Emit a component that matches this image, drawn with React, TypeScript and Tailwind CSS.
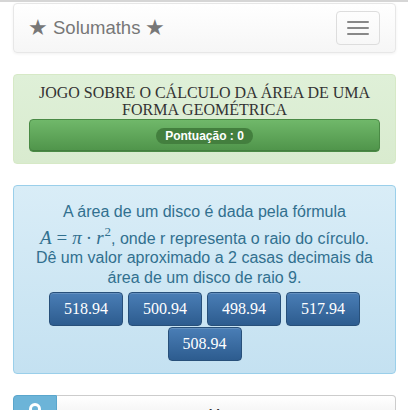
import React from "react";

const serif = { fontFamily: '"Liberation Serif", "Times New Roman", serif' };

export default function App() {
  const answers = ["518.94", "500.94", "498.94", "517.94", "508.94"];
  return (
    <div className="w-[408px] h-[410px] overflow-hidden bg-white" style={{ fontFamily: '"Liberation Sans", Arial, sans-serif' }}>
      <div className="h-[2px] bg-[#d6d6d6]" />
      {/* Navbar */}
      <div className="ml-[13px] mr-[12px] mt-[1px] h-[50px] rounded-[4px] border border-[#e7e7e7] bg-gradient-to-b from-white to-[#f6f6f6] shadow-[0_1px_3px_rgba(0,0,0,0.06)] flex items-center justify-between pl-[14px] pr-[15px]">
        <div className="text-[18.5px] text-[#777] flex items-center gap-[5px] leading-none">
          <span className="text-[22px]">★</span>
          <span>Solumaths</span>
          <span className="text-[22px]">★</span>
        </div>
        <div className="w-[44px] h-[34px] rounded-[4px] border border-[#ddd] flex flex-col items-center justify-center gap-[4px]">
          <span className="block w-[22px] h-[2px] bg-[#888] rounded-[1px]" />
          <span className="block w-[22px] h-[2px] bg-[#888] rounded-[1px]" />
          <span className="block w-[22px] h-[2px] bg-[#888] rounded-[1px]" />
        </div>
      </div>

      {/* Green panel */}
      <div className="ml-[13px] mr-[12px] mt-[21px] rounded-[4px] border border-[#d6e9c6] bg-gradient-to-b from-[#dff0d8] to-[#d9ebcf] px-[15px] pt-[9px] pb-[11px]">
        <div className="text-center text-[16px] leading-[17px] text-[#333] uppercase" style={serif}>
          Jogo sobre o cálculo da área de uma forma geométrica
        </div>
        <div className="mt-[1px] h-[33px] rounded-[4px] border border-[#4a8a45] bg-gradient-to-b from-[#70b86a] to-[#4f944a] flex items-center justify-center shadow-[inset_0_-1px_0_rgba(0,0,0,0.15)]">
          <span className="h-[16px] px-[9px] rounded-full bg-[#437f3e] text-white text-[12px] font-bold leading-[16px]">
            Pontuação : 0
          </span>
        </div>
      </div>

      {/* Blue panel */}
      <div className="ml-[13px] mr-[12px] mt-[21px] h-[189px] rounded-[4px] border border-[#9acfea] bg-gradient-to-b from-[#d9edf7] to-[#c4e1f1] pt-[16px] px-[10px]">
        <div className="text-center text-[16px] leading-[20px] text-[#31708f]">
          <div>A área de um disco é dada pela fórmula</div>
          <div className="mt-[6px] h-[20px] leading-[20px]">
            <span className="text-[19px] leading-none text-[#31708f]" style={serif}>
              <i>A</i>
              <span className="mx-[5px]">=</span>
              <i>π</i>
              <span className="mx-[4px]">·</span>
              <i>r</i>
              <span className="text-[13px] relative top-[-8px] ml-[1px]">2</span>
            </span>
            , onde r representa o raio do círculo.
          </div>
          <div>Dê um valor aproximado a 2 casas decimais da</div>
          <div>área de um disco de raio 9.</div>
        </div>
        <div className="mt-[4px] flex flex-wrap justify-center gap-x-[5px] gap-y-[1px] px-[18px]">
          {answers.map((a) => (
            <button
              key={a}
              className="h-[34px] px-[14px] rounded-[4px] border border-[#28507a] bg-gradient-to-b from-[#4a7eb6] to-[#2d5c8f] text-white text-[16px] leading-[20px] shadow-[inset_0_1px_0_rgba(255,255,255,0.15)]"
              style={serif}
            >
              {a}
            </button>
          ))}
        </div>
      </div>

      {/* Bottom menu */}
      <div className="ml-[13px] mr-[12px] mt-[21px] flex h-[34px]">
        <div className="w-[44px] rounded-l-[4px] bg-[#6cb4d8] border border-[#5aa6cc] flex justify-center pt-[7px]">
          <span className="block w-[12px] h-[12px] rounded-full border-[3px] border-white" />
        </div>
        <div className="flex-1 rounded-r-[4px] border border-[#ccc] border-l-0 bg-gradient-to-b from-white to-[#ececec] text-center text-[14px] text-[#333] pt-[8px]">
          Menu
        </div>
      </div>
    </div>
  );
}
